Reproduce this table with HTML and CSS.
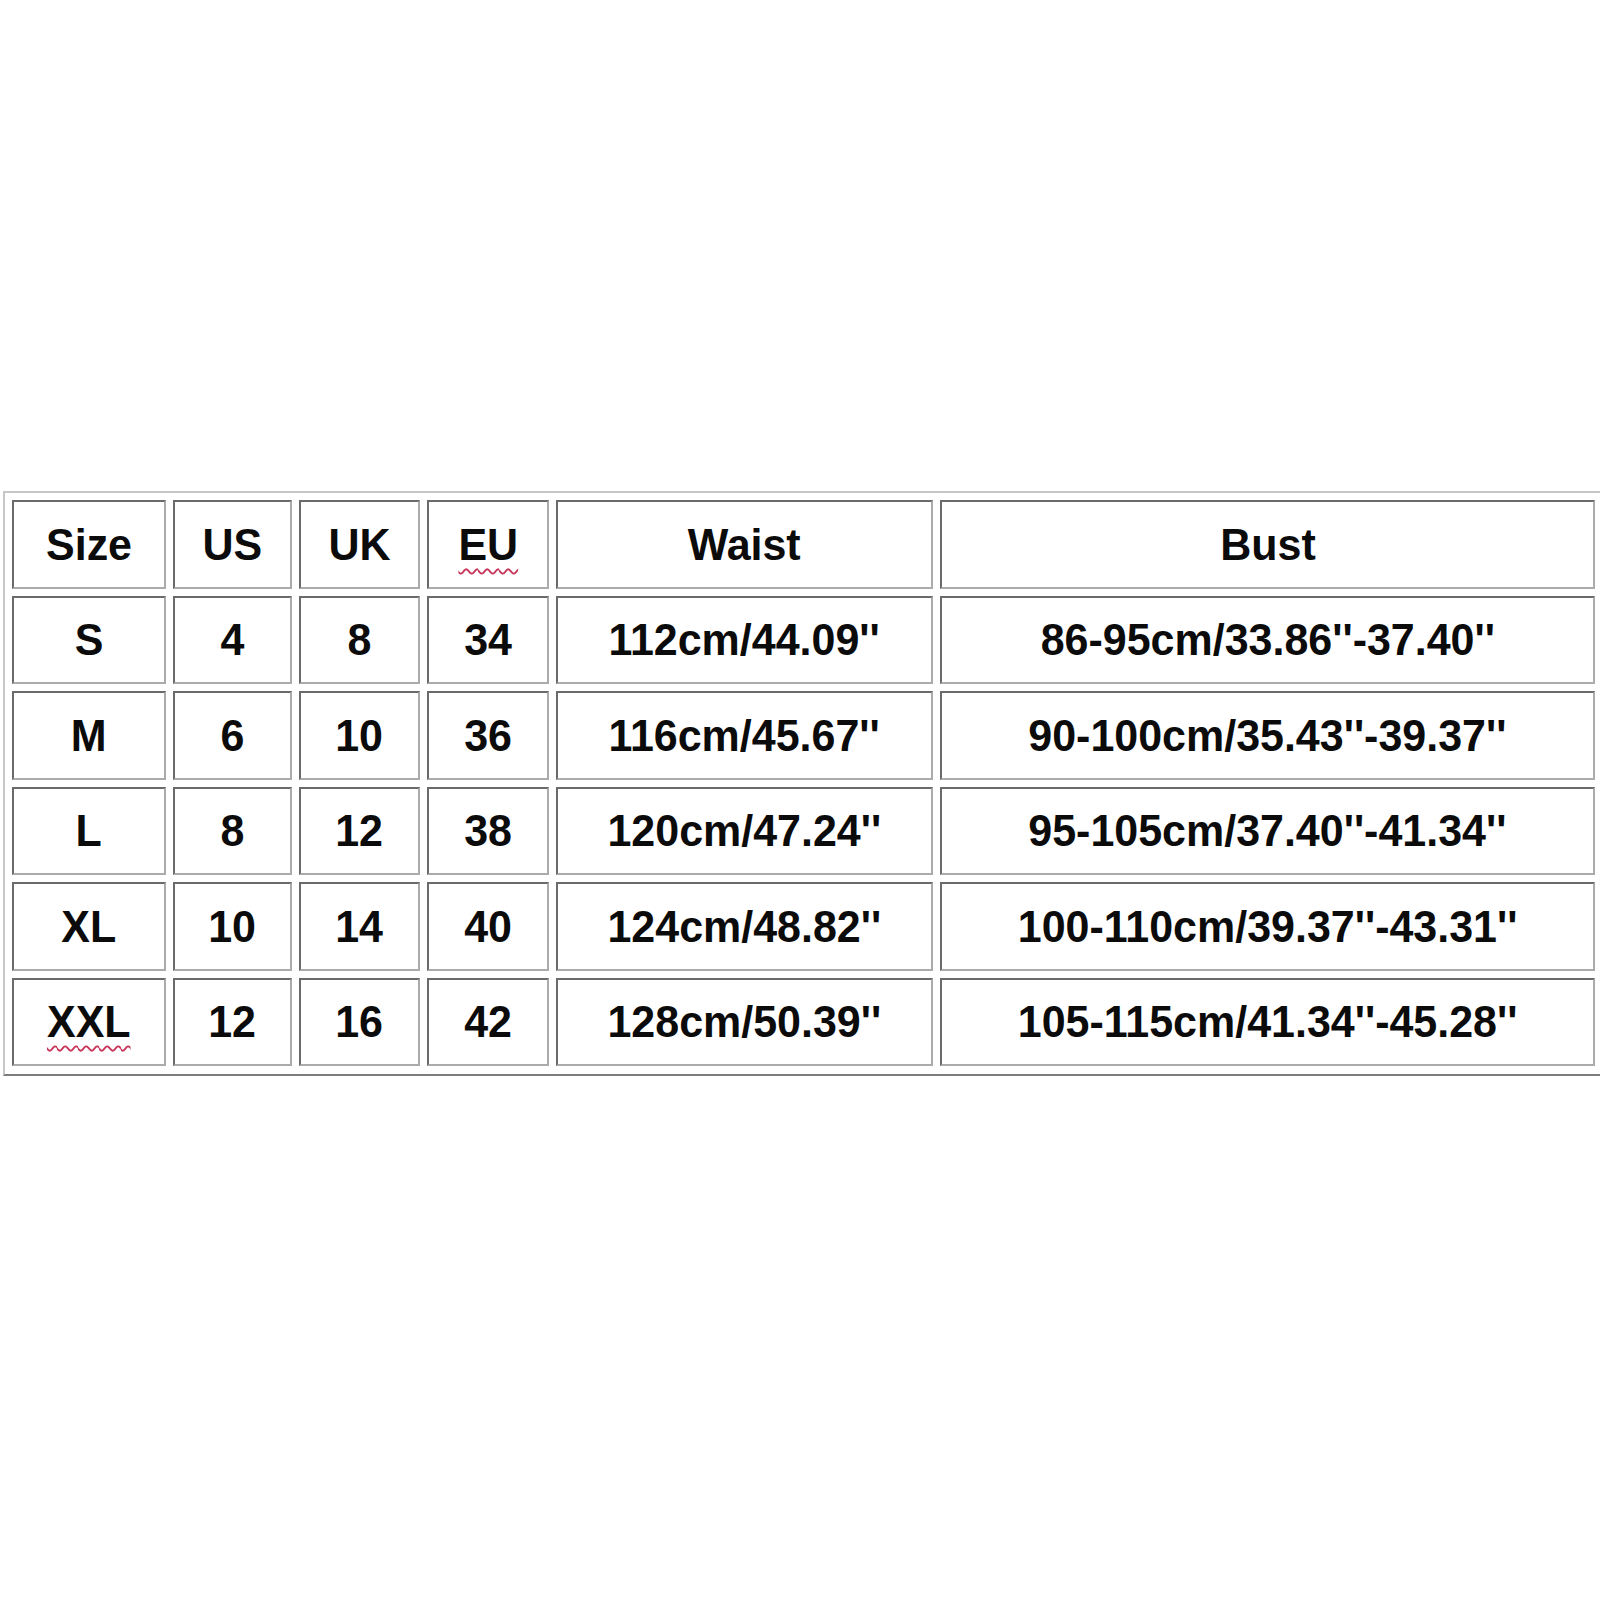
FILE: index.html
```html
<!DOCTYPE html>
<html lang="en">
<head>
<meta charset="utf-8">
<title>Size Chart</title>
<link rel="stylesheet" href="styles.css">
</head>
<body>
<div class="page">
  <div class="chart">
    <div class="cell"><span class="t">Size</span></div>
    <div class="cell"><span class="t">US</span></div>
    <div class="cell"><span class="t">UK</span></div>
    <div class="cell"><span class="t spell">EU</span></div>
    <div class="cell"><span class="t">Waist</span></div>
    <div class="cell"><span class="t">Bust</span></div>

    <div class="cell"><span class="t">S</span></div>
    <div class="cell"><span class="t">4</span></div>
    <div class="cell"><span class="t">8</span></div>
    <div class="cell"><span class="t">34</span></div>
    <div class="cell"><span class="t">112cm/44.09''</span></div>
    <div class="cell"><span class="t">86-95cm/33.86''-37.40''</span></div>

    <div class="cell"><span class="t">M</span></div>
    <div class="cell"><span class="t">6</span></div>
    <div class="cell"><span class="t">10</span></div>
    <div class="cell"><span class="t">36</span></div>
    <div class="cell"><span class="t">116cm/45.67''</span></div>
    <div class="cell"><span class="t">90-100cm/35.43''-39.37''</span></div>

    <div class="cell"><span class="t">L</span></div>
    <div class="cell"><span class="t">8</span></div>
    <div class="cell"><span class="t">12</span></div>
    <div class="cell"><span class="t">38</span></div>
    <div class="cell"><span class="t">120cm/47.24''</span></div>
    <div class="cell"><span class="t">95-105cm/37.40''-41.34''</span></div>

    <div class="cell"><span class="t">XL</span></div>
    <div class="cell"><span class="t">10</span></div>
    <div class="cell"><span class="t">14</span></div>
    <div class="cell"><span class="t">40</span></div>
    <div class="cell"><span class="t">124cm/48.82''</span></div>
    <div class="cell"><span class="t">100-110cm/39.37''-43.31''</span></div>

    <div class="cell"><span class="t spell">XXL</span></div>
    <div class="cell"><span class="t">12</span></div>
    <div class="cell"><span class="t">16</span></div>
    <div class="cell"><span class="t">42</span></div>
    <div class="cell"><span class="t">128cm/50.39''</span></div>
    <div class="cell"><span class="t">105-115cm/41.34''-45.28''</span></div>
  </div>
</div>
</body>
</html>
```
FILE: styles.css
```css
html, body {
  margin: 0;
  padding: 0;
  background: #ffffff;
  overflow: hidden;
}

.page {
  width: 1600px;
  height: 1600px;
  padding: 491px 0 0 3px;
  box-sizing: border-box;
}

.chart {
  display: grid;
  width: max-content;
  grid-template-columns: 154px 119px 121px 122px 377px 655px;
  grid-auto-rows: 88.5px;
  gap: 7px;
  padding: 7px 7px 8px 7px;
  border-top: 2px solid #c6c6c6;
  border-left: 2px solid #c6c6c6;
  border-bottom: 2px solid #7c7c7c;
  border-right: 2px solid #7c7c7c;
  background: #ffffff;
}

.cell {
  box-sizing: border-box;
  display: flex;
  align-items: center;
  justify-content: center;
  border-top: 2px solid #6a6a6a;
  border-left: 2px solid #6a6a6a;
  border-bottom: 2px solid #ababab;
  border-right: 2px solid #ababab;
  background: #ffffff;
  overflow: hidden;
}

.t {
  display: inline-block;
  font-family: "Liberation Sans", Arial, sans-serif;
  font-weight: 700;
  font-size: 45px;
  line-height: 1;
  color: #0b0b0b;
  white-space: nowrap;
  transform: scaleX(0.955);
}

.spell {
  text-decoration: underline wavy #c8365a;
  text-decoration-thickness: 2px;
  text-underline-offset: 8px;
}
```
